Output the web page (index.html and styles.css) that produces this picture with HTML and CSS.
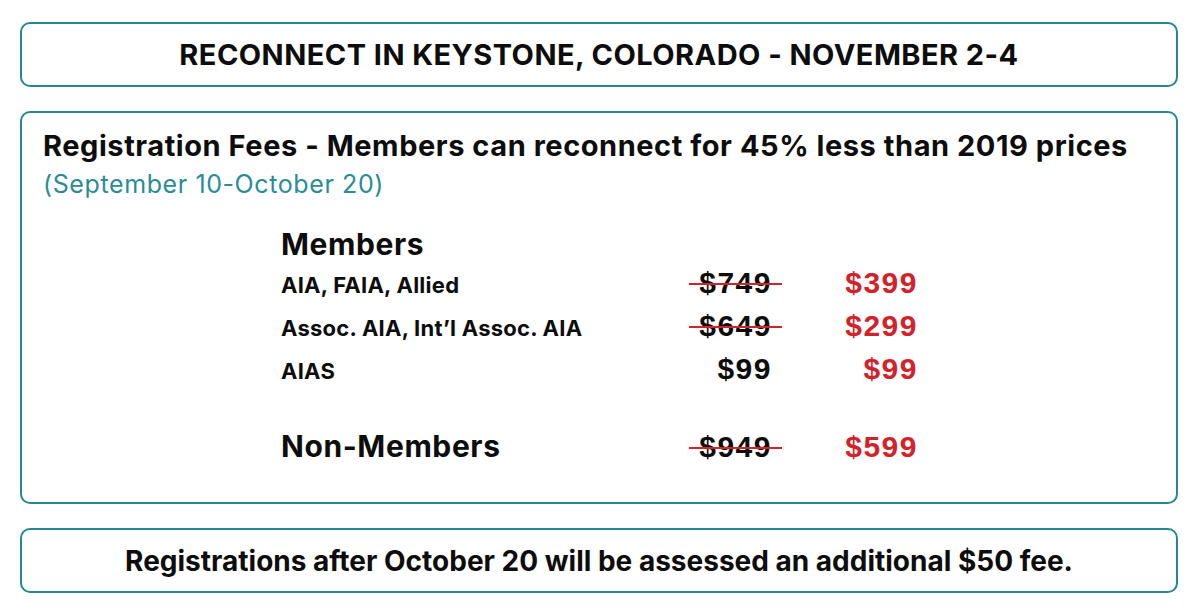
FILE: index.html
```html
<!DOCTYPE html>
<html lang="en">
<head>
<meta charset="utf-8">
<title>Reconnect Registration Fees</title>
<link rel="stylesheet" href="styles.css">
</head>
<body>
<main class="page">
  <section class="box banner">
    <h1 class="banner-title">RECONNECT IN KEYSTONE, COLORADO - NOVEMBER 2-4</h1>
  </section>
  <section class="box fees">
    <h2 class="fees-title">Registration Fees - Members can reconnect for 45% less than 2019 prices</h2>
    <p class="fees-dates">(September 10-October 20)</p>
    <div class="table">
      <div class="group-head">Members</div>
      <div class="row">
        <span class="label">AIA, FAIA, Allied</span>
        <span class="price old">$749</span>
        <span class="price new">$399</span>
      </div>
      <div class="row">
        <span class="label">Assoc. AIA, Int’l Assoc. AIA</span>
        <span class="price old">$649</span>
        <span class="price new">$299</span>
      </div>
      <div class="row">
        <span class="label">AIAS</span>
        <span class="price">$99</span>
        <span class="price new">$99</span>
      </div>
      <div class="row row-group">
        <span class="group-head">Non-Members</span>
        <span class="price old">$949</span>
        <span class="price new">$599</span>
      </div>
    </div>
  </section>
  <section class="box banner">
    <p class="note">Registrations after October 20 will be assessed an additional $50 fee.</p>
  </section>
</main>
</body>
</html>
```

FILE: styles.css
```css
* { box-sizing: border-box; }
html, body { margin: 0; padding: 0; background: #fff; }
body {
  font-family: "Inter", "Liberation Sans", sans-serif;
  color: #0d0d0d;
}
.page {
  padding: 22px 22px 0 20px;
  display: flex;
  flex-direction: column;
  gap: 24px;
}
.box {
  border: 2px solid #23888f;
  border-radius: 10px;
  background: #fff;
}
.banner {
  height: 65px;
  display: flex;
  align-items: center;
  justify-content: center;
}
.banner-title {
  margin: 0;
  font-size: 29px;
  font-weight: 700;
  letter-spacing: 0.45px;
  line-height: 1;
}
.note {
  margin: 0;
  font-size: 28px;
  font-weight: 700;
  letter-spacing: 0;
  line-height: 1;
}
.fees {
  height: 393px;
  padding: 16px 20px 0 21px;
}
.fees-title {
  margin: 0;
  font-size: 29px;
  font-weight: 700;
  letter-spacing: 0.55px;
  line-height: 34px;
}
.fees-dates {
  margin: 7px 0 0;
  font-size: 25px;
  font-weight: 400;
  letter-spacing: 0.6px;
  color: #2a8d96;
  line-height: 28px;
}
.table {
  margin: 28px 0 0 238px;
  display: flex;
  flex-direction: column;
  width: 640px;
}
.group-head {
  font-size: 30px;
  font-weight: 700;
  letter-spacing: 0.6px;
  line-height: 36px;
}
.row {
  display: grid;
  grid-template-columns: 400px 91px 146px;
  align-items: baseline;
  height: 43px;
  padding-top: 4px;
}
.row-group {
  margin-top: 33px;
}
.label {
  font-size: 22px;
  font-weight: 700;
  letter-spacing: 0.25px;
}
.price {
  font-family: "Liberation Sans", Arial, sans-serif;
  font-weight: 700;
  font-size: 30px;
  letter-spacing: 1.5px;
  text-align: right;
  justify-self: end;
  position: relative;
}
.price.new { color: #d2232a; }
.price.old::after {
  content: "";
  position: absolute;
  left: -10px;
  right: -10px;
  top: 50%;
  height: 2px;
  background: #d2232a;
}
```
